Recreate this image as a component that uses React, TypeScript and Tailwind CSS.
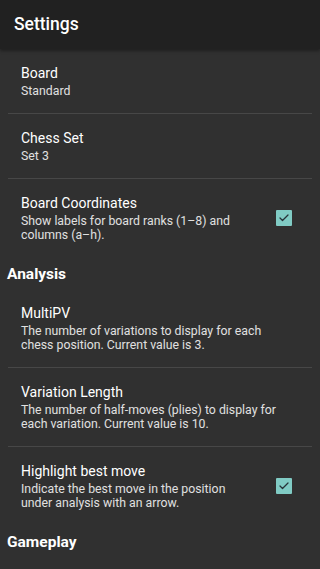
import { Check } from 'lucide-react';

interface Pref {
  title: string;
  summary: string;
  checked?: boolean;
  last?: boolean;
}

const BOARD: Pref[] = [
  { title: 'Board', summary: 'Standard' },
  { title: 'Chess Set', summary: 'Set 3' },
  { title: 'Board Coordinates', summary: 'Show labels for board ranks (1–8) and columns (a–h).', checked: true, last: true },
];

const ANALYSIS: Pref[] = [
  { title: 'MultiPV', summary: 'The number of variations to display for each chess position. Current value is 3.' },
  { title: 'Variation Length', summary: 'The number of half-moves (plies) to display for each variation. Current value is 10.' },
  { title: 'Highlight best move', summary: 'Indicate the best move in the position under analysis with an arrow.', checked: true, last: true },
];

function Row({ title, summary, checked, last }: Pref) {
  return (
    <div className={'mx-[8px] flex items-center pl-[13px] pr-[20px] pt-[15px] pb-[15px] ' + (last ? '' : 'border-b border-[#474747]')}>
      <div className={checked !== undefined ? 'flex-1 pr-[30px]' : 'flex-1 pr-[6px]'}>
        <div className="text-[14px] leading-[18px] text-white">{title}</div>
        <div className="mt-[2px] text-[12.3px] leading-[14px] text-[#e0e0e0]">{summary}</div>
      </div>
      {checked !== undefined && (
        <div className="flex h-[16px] w-[16px] shrink-0 items-center justify-center rounded-[1px] bg-[#80cbc4]">
          <Check size={12} strokeWidth={2.5} color="#263238" />
        </div>
      )}
    </div>
  );
}

function Category({ label }: { label: string }) {
  return (
    <div className="px-[7px] pt-[8px] pb-[6px] text-[15.5px] font-bold leading-[18px] text-white">{label}</div>
  );
}

export default function App() {
  return (
    <div className="h-[569px] overflow-hidden bg-[#303030]" style={{ fontFamily: 'Roboto, "Noto Sans", sans-serif' }}>
      <div className="relative z-10 flex h-[49px] items-center bg-[#212121] px-[14px] shadow-[0_2px_3px_rgba(0,0,0,0.35)]">
        <span className="text-[17.5px] font-medium text-white">Settings</span>
      </div>
      {BOARD.map((p) => (
        <Row key={p.title} {...p} />
      ))}
      <Category label="Analysis" />
      {ANALYSIS.map((p) => (
        <Row key={p.title} {...p} />
      ))}
      <Category label="Gameplay" />
    </div>
  );
}
